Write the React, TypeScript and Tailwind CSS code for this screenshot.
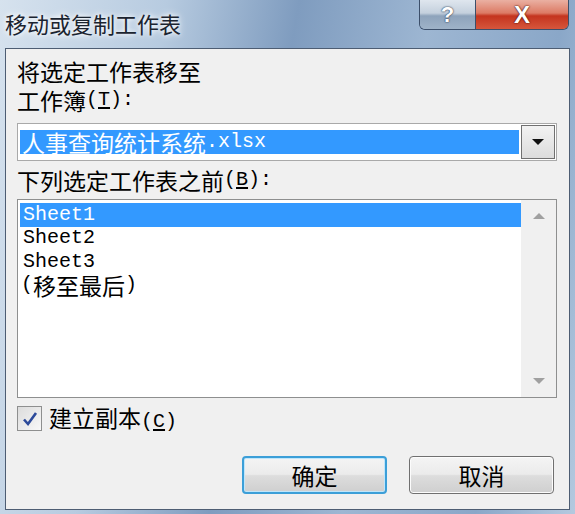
const cjk = "font-['Noto_Sans_CJK_SC',sans-serif]";
const mono = "font-['Liberation_Mono','Noto_Sans_CJK_SC',monospace]";

function Mn({ children }: { children: React.ReactNode }) {
  return <span className={`${mono} text-[20px] leading-none`}>{children}</span>;
}

function Accel({ k }: { k: string }) {
  return (
    <Mn>
      (<span className="underline underline-offset-2">{k}</span>)
    </Mn>
  );
}

function Label({ children, mt }: { children: React.ReactNode; mt: string }) {
  return (
    <div className={`h-[24px] flex items-center ${cjk} text-[23px] leading-none whitespace-nowrap ${mt}`}>
      {children}
    </div>
  );
}

function TitleBar() {
  return (
    <div className="h-[48px] shrink-0 flex items-start justify-between">
      <div
        className={`${cjk} text-[22px] leading-none text-[#1b2430] pl-[5px] pt-[12px] [text-shadow:0_0_8px_#ffffff,0_0_4px_#ffffff]`}
      >
        移动或复制工作表
      </div>
      <div className="flex mr-[6px] h-[30px] rounded-b-[6px] border border-t-0 border-[#3c4f6a] overflow-hidden">
        <div className="w-[56px] h-full flex items-center justify-center bg-[linear-gradient(#dfe6ee_0%,#c4d0dd_45%,#8ea3bb_55%,#9fb3c8_100%)] border-r border-[#3c4f6a]">
          <span className="font-['Liberation_Sans',sans-serif] font-bold text-[22px] text-white leading-none [text-shadow:0_0_2px_#2d3e55,0_0_1px_#2d3e55]">
            ?
          </span>
        </div>
        <div className="w-[92px] h-full flex items-center justify-center bg-[linear-gradient(#eab0a2_0%,#dc7a64_45%,#c4341e_55%,#d6563c_100%)]">
          <span className="font-['Liberation_Sans',sans-serif] font-bold text-[24px] text-white leading-none [text-shadow:0_0_2px_#4a1208,0_0_1px_#4a1208]">
            X
          </span>
        </div>
      </div>
    </div>
  );
}

function Combo() {
  return (
    <div className="h-[38px] border border-[#a9a9a9] bg-white flex items-stretch">
      <div className="flex-1 py-[6px] px-[2px] flex">
        <div className={`flex-1 bg-[#3399ff] text-white ${cjk} text-[23px] leading-none pl-[2px] flex items-center whitespace-nowrap`}>
          人事查询统计系统<Mn>.xlsx</Mn>
        </div>
      </div>
      <div className="w-[34px] my-[1px] mr-[1px] border border-[#707070] bg-[linear-gradient(#f2f2f2,#dcdcdc)] flex items-center justify-center">
        <svg width="14" height="8" viewBox="0 0 14 8">
          <path d="M1 1h12L7 7z" fill="#111" />
        </svg>
      </div>
    </div>
  );
}

function ListBox() {
  const items = ["Sheet1", "Sheet2", "Sheet3"];
  return (
    <div className="h-[199px] border border-[#8e8f8f] bg-white flex">
      <div className="flex-1 pt-[3px] pl-[2px]">
        {items.map((s, i) => (
          <div
            key={s}
            className={`h-[23.5px] flex items-center pl-[3px] ${mono} text-[20px] leading-none ${
              i === 0 ? "bg-[#3399ff] text-white" : "text-black"
            }`}
          >
            {s}
          </div>
        ))}
        <div className={`h-[23.5px] flex items-center pl-[1px] ${cjk} text-[23px] leading-none text-black`}>
          <Mn>(</Mn>移至最后<Mn>)</Mn>
        </div>
      </div>
      <div className="w-[35px] bg-[#f0f0f0] flex flex-col items-center justify-between py-[12px]">
        <svg width="14" height="8" viewBox="0 0 14 8">
          <path d="M1 7h12L7 1z" fill="#a0a0a0" />
        </svg>
        <svg width="14" height="8" viewBox="0 0 14 8">
          <path d="M1 1h12L7 7z" fill="#a0a0a0" />
        </svg>
      </div>
    </div>
  );
}

function Btn({ label, focus }: { label: string; focus?: boolean }) {
  return (
    <div
      className={`w-[145px] h-[38px] rounded-[4px] flex items-center justify-center ${cjk} text-[23px] leading-none text-black bg-[linear-gradient(#f4f4f4_0%,#ebebeb_48%,#dddddd_52%,#cfcfcf_100%)] ${
        focus
          ? "border-2 border-[#3c9fd8] shadow-[inset_0_0_0_1px_#bfe6fb]"
          : "border border-[#707070] shadow-[inset_0_0_0_1px_#fcfcfc]"
      }`}
    >
      {label}
    </div>
  );
}

export default function App() {
  return (
    <div className="w-[575px] h-[514px] overflow-hidden flex flex-col bg-[linear-gradient(100deg,#d6e2ee_0%,#b7cbe0_25%,#7f9cbf_45%,#9db6d2_65%,#8aa7c8_85%,#b4c9df_100%)]">
      <TitleBar />
      <div className="mx-[5px] h-[462px] shrink-0 border border-[#4d5d73] bg-[#f0f0f0] flex flex-col px-[11px] text-black">
        <Label mt="mt-[10px]">将选定工作表移至</Label>
        <Label mt="mt-[5px]">
          工作簿<Accel k="T" />
          <Mn>:</Mn>
        </Label>
        <div className="mt-[11px] mr-[1px]">
          <Combo />
        </div>
        <Label mt="mt-[7px]">
          下列选定工作表之前<Accel k="B" />
          <Mn>:</Mn>
        </Label>
        <div className="mt-[7px] mr-[1px]">
          <ListBox />
        </div>
        <div className="mt-[7px] h-[27px] flex items-center gap-[7px]">
          <div className="w-[25px] h-[25px] border border-[#8e8f8f] bg-[linear-gradient(135deg,#dcdcdc,#f8f8f8)] flex items-center justify-center">
            <svg width="18" height="18" viewBox="0 0 18 18">
              <path d="M3 9.5l4 4.5L15 3" fill="none" stroke="#2c4a9a" strokeWidth="2.6" />
            </svg>
          </div>
          <div className={`${cjk} text-[23px] leading-none whitespace-nowrap`}>
            建立副本<Accel k="C" />
          </div>
        </div>
        <div className="mt-[24px] flex justify-end gap-[22px] pr-[4px]">
          <Btn label="确定" focus />
          <Btn label="取消" />
        </div>
      </div>
    </div>
  );
}
